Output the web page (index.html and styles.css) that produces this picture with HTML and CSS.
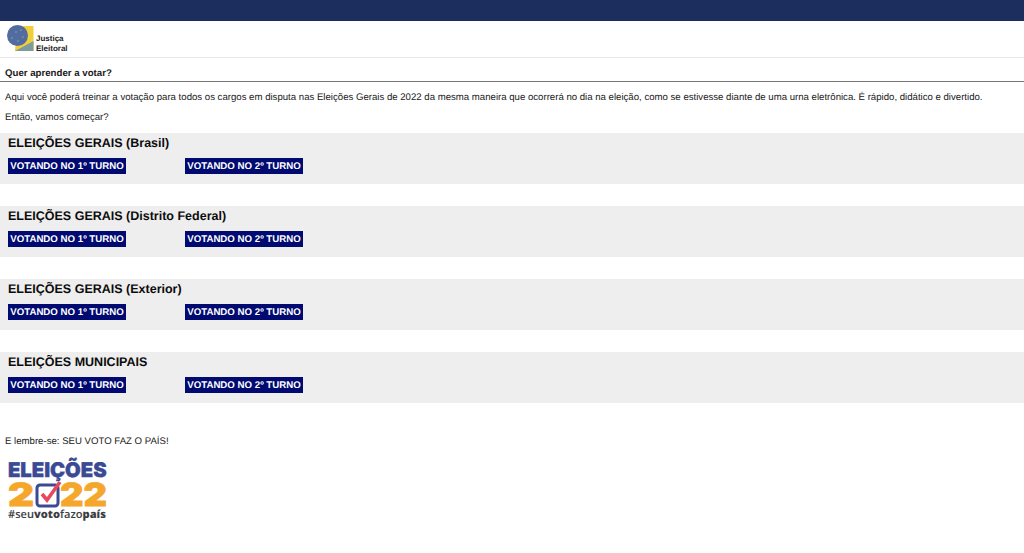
FILE: index.html
```html
<!DOCTYPE html>
<html lang="pt-BR">
<head>
<meta charset="utf-8">
<title>Quer aprender a votar?</title>
<link rel="stylesheet" href="styles.css">
</head>
<body>
<div class="topbar"></div>
<header class="brand">
  <svg class="brand-mark" width="27" height="27" viewBox="0 0 27 27" aria-hidden="true">
    <path d="M10 1H26.5V26H8Z" fill="#f0cf3c"/>
    <path d="M8 26L26.5 16V26Z" fill="#7f9a9c"/>
    <circle cx="10.5" cy="10.5" r="10.5" fill="#526c9f"/>
    <g fill="#8ea2c6"><circle cx="5" cy="13" r=".8"/><circle cx="9" cy="7" r=".8"/><circle cx="14" cy="5" r=".8"/><circle cx="16" cy="12" r=".8"/><circle cx="11" cy="16" r=".8"/></g>
  </svg>
  <div class="brand-name">Justiça<br>Eleitoral</div>
</header>
<h1 class="page-title">Quer aprender a votar?</h1>
<p class="intro">Aqui você poderá treinar a votação para todos os cargos em disputa nas Eleições Gerais de 2022 da mesma maneira que ocorrerá no dia na eleição, como se estivesse diante de uma urna eletrônica. É rápido, didático e divertido.</p>
<p class="intro intro-second">Então, vamos começar?</p>
<main class="sections">
  <section class="election">
    <h2>ELEIÇÕES GERAIS (Brasil)</h2>
    <div class="actions"><a class="btn">VOTANDO NO 1º TURNO</a><a class="btn">VOTANDO NO 2º TURNO</a></div>
  </section>
  <section class="election">
    <h2>ELEIÇÕES GERAIS (Distrito Federal)</h2>
    <div class="actions"><a class="btn">VOTANDO NO 1º TURNO</a><a class="btn">VOTANDO NO 2º TURNO</a></div>
  </section>
  <section class="election">
    <h2>ELEIÇÕES GERAIS (Exterior)</h2>
    <div class="actions"><a class="btn">VOTANDO NO 1º TURNO</a><a class="btn">VOTANDO NO 2º TURNO</a></div>
  </section>
  <section class="election">
    <h2>ELEIÇÕES MUNICIPAIS</h2>
    <div class="actions"><a class="btn">VOTANDO NO 1º TURNO</a><a class="btn">VOTANDO NO 2º TURNO</a></div>
  </section>
</main>
<p class="remember">E lembre-se: SEU VOTO FAZ O PAÍS!</p>
<div class="logo2022">
  <svg width="100" height="62" viewBox="0 0 100 62" role="img" aria-label="Eleições 2022">
    <text class="l-title" x="0" y="17">ELEIÇÕES</text>
    <text class="l-year" x="0" y="46" textLength="26" lengthAdjust="spacingAndGlyphs">2</text>
    <text class="l-year" x="52" y="46" textLength="47" lengthAdjust="spacingAndGlyphs">22</text>
    <rect x="29" y="25" width="21" height="21" rx="3" fill="#fff" stroke="#3a4a94" stroke-width="3"/>
    <path d="M34 34L39 40L52 22" fill="none" stroke="#e8485c" stroke-width="3.6"/>
    <text class="l-tag" x="0" y="58">#seu<tspan class="b">voto</tspan>fazo<tspan class="b">país</tspan></text>
  </svg>
</div>
</body>
</html>
```
FILE: styles.css
```css
* { box-sizing: border-box; }
html, body { margin: 0; padding: 0; }
body {
  background: #fff;
  color: #1a1a1a;
  font-family: "Liberation Sans", Arial, sans-serif;
  font-size: 9.62px;
  height: 553px;
  overflow: hidden;
  text-rendering: geometricPrecision;
}
.topbar { height: 21px; background: #1b2e5e; }
.brand {
  height: 37px;
  display: flex;
  align-items: flex-start;
  padding: 4px 0 0 7px;
  border-bottom: 1px solid #e8e8e8;
}
.brand-mark { display: block; }
.brand-name {
  margin: 9px 0 0 2px;
  font-weight: 700;
  font-size: 8px;
  line-height: 9.5px;
  color: #222;
}
.page-title {
  margin: 0;
  height: 24px;
  padding: 9px 0 0 5px;
  font-size: 9.67px;
  line-height: 13px;
  font-weight: 700;
  border-bottom: 1px solid #777;
}
.intro {
  margin: 0;
  padding: 9px 0 0 5px;
  line-height: 14px;
  white-space: nowrap;
}
.intro-second { padding-top: 6px; }
.sections {
  display: flex;
  flex-direction: column;
  gap: 22px;
  margin-top: 8px;
}
.election {
  height: 51px;
  background: #eeeeee;
  padding: 3px 0 0 8px;
}
.election h2 {
  margin: 0;
  font-size: 12.5px;
  line-height: 15px;
  font-weight: 700;
  color: #0c0c0c;
}
.actions {
  display: flex;
  gap: 59px;
  margin-top: 7px;
}
.btn {
  display: block;
  width: 118px;
  height: 16px;
  background: #000a70;
  color: #fff;
  font-size: 9.68px;
  font-weight: 700;
  line-height: 17px;
  text-align: center;
  white-space: nowrap;
}
.remember {
  margin: 32px 0 0 5px;
  line-height: 13px;
  color: #222;
  white-space: nowrap;
}
.logo2022 { margin: 12px 0 0 8px; }
.logo2022 svg { display: block; overflow: visible; }
.l-title { font: 900 20.2px Inter, "Liberation Sans", sans-serif; fill: #3a4a94; stroke: #3a4a94; stroke-width: .4px; }
.l-year { font: 900 32px Inter, "Liberation Sans", sans-serif; fill: #f5a72c; stroke: #f5a72c; stroke-width: .8px; }
.l-tag { font: 600 11.1px "Open Sans", "Liberation Sans", sans-serif; fill: #3d3d44; }
.l-tag .b { font-weight: 800; }
```
